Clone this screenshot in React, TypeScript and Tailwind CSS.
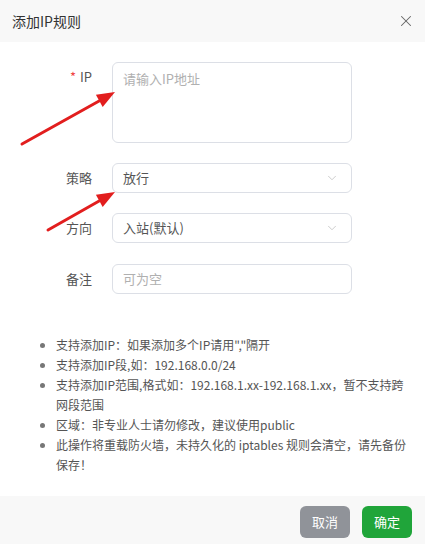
import { ChevronDown, X } from "lucide-react";

function Label({ text, required }: { text: string; required?: boolean }) {
  return (
    <div className="w-[112px] shrink-0 pr-5 text-right text-[13px] leading-[30px] text-[#555]">
      {required && <span className="mr-1 text-[#f04444]">*</span>}
      {text}
    </div>
  );
}

function Select({ value }: { value: string }) {
  return (
    <div className="flex h-[30px] w-[240px] items-center justify-between rounded-md border border-[#dcdfe6] bg-white pl-[10px] pr-3 text-[13px] text-[#555]">
      <span>{value}</span>
      <ChevronDown size={14} strokeWidth={1.2} className="text-[#b8b8b8]" />
    </div>
  );
}

export default function App() {
  const tips = [
    '支持添加IP：如果添加多个IP请用","隔开',
    "支持添加IP段,如：192.168.0.0/24",
    "支持添加IP范围,格式如：192.168.1.xx-192.168.1.xx，暂不支持跨网段范围",
    "区域：非专业人士请勿修改，建议使用public",
    "此操作将重载防火墙，未持久化的 iptables 规则会清空，请先备份保存！",
  ];

  return (
    <div
      className="relative flex h-[544px] w-[425px] flex-col bg-white"
      style={{ fontFamily: '"Noto Sans CJK SC", "Noto Sans", sans-serif' }}
    >
      {/* header */}
      <div className="flex h-[42px] shrink-0 items-center justify-between bg-[#f8f8f8] pl-3 pr-[10px]">
        <span className="text-[14px] text-[#333]">添加IP规则</span>
        <X size={18} strokeWidth={1.4} className="text-[#666]" />
      </div>

      {/* form */}
      <div className="flex flex-col pt-5">
        <div className="flex">
          <Label text="IP" required />
          <div className="h-[81px] w-[240px] rounded-md border border-[#dcdfe6] px-[10px] py-[6px] text-[13px] text-[#b0b0b0]">
            请输入IP地址
          </div>
        </div>

        <div className="mt-5 flex">
          <Label text="策略" />
          <Select value="放行" />
        </div>

        <div className="mt-5 flex">
          <Label text="方向" />
          <Select value="入站(默认)" />
        </div>

        <div className="mt-[21px] flex">
          <Label text="备注" />
          <div className="flex h-[30px] w-[240px] items-center rounded-md border border-[#dcdfe6] px-[10px] text-[13px] text-[#b0b0b0]">
            可为空
          </div>
        </div>
      </div>

      {/* tips */}
      <ul className="mt-[41px] list-disc pl-[56px] pr-[14px] text-[12px] leading-[20px] text-[#555] marker:text-[#777]">
        {tips.map((t) => (
          <li key={t}>{t}</li>
        ))}
      </ul>

      {/* footer */}
      <div className="mt-auto flex h-[48px] shrink-0 items-start justify-end gap-3 bg-[#f8f8f8] pr-[13px] pt-[10px]">
        <button className="h-[32px] w-[50px] rounded-md bg-[#909399] text-[13px] text-white">取消</button>
        <button className="h-[32px] w-[50px] rounded-md bg-[#20a53a] text-[13px] text-white">确定</button>
      </div>

      {/* red annotation arrows */}
      <svg className="pointer-events-none absolute left-0 top-0" width="425" height="544">
        <line x1="22" y1="144" x2="100" y2="100.5" stroke="#e21e1e" strokeWidth="3" strokeLinecap="round" />
        <polygon points="115,92 102.7,107 95.9,94.7" fill="#e21e1e" />
        <line x1="48" y1="230" x2="100" y2="200.5" stroke="#e21e1e" strokeWidth="3" strokeLinecap="round" />
        <polygon points="115,192 102.7,207 95.9,194.8" fill="#e21e1e" />
      </svg>
    </div>
  );
}
